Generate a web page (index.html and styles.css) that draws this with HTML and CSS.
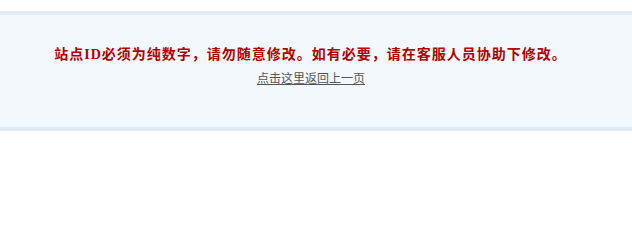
FILE: index.html
```html
<!DOCTYPE html>
<html lang="zh-CN">
<head>
<meta charset="utf-8">
<title>提示信息</title>
<link rel="stylesheet" href="styles.css">
</head>
<body>
<div class="msg-box">
  <p class="msg-title">站点ID必须为纯数字，请勿随意修改。如有必要，请在客服人员协助下修改。</p>
  <p class="msg-link"><a href="#">点击这里返回上一页</a></p>
</div>
</body>
</html>
```

FILE: styles.css
```css
html, body {
  margin: 0;
  padding: 0;
  background: #ffffff;
}
body {
  font-family: "Liberation Serif", "Noto Sans CJK SC", serif;
  font-size: 12px;
}
.msg-box {
  margin-top: 11px;
  background: #f2f8fc;
  border-top: 4px solid #e1ecf4;
  border-bottom: 4px solid #deebf4;
  height: 112px;
  box-sizing: content-box;
  text-align: center;
  display: flex;
  flex-direction: column;
  align-items: center;
  padding-top: 31px;
  box-sizing: border-box;
  height: 120px;
}
.msg-title {
  margin: 0 0 0 -11px;
  font-size: 14px;
  line-height: 18px;
  font-weight: bold;
  color: #b20000;
  letter-spacing: 1px;
}
.msg-link {
  margin: 6px 0 0 -10px;
  font-family: "Noto Sans CJK SC", sans-serif;
  font-size: 12px;
  line-height: 16px;
}
.msg-link a {
  color: #555555;
  text-decoration: underline;
}
```
